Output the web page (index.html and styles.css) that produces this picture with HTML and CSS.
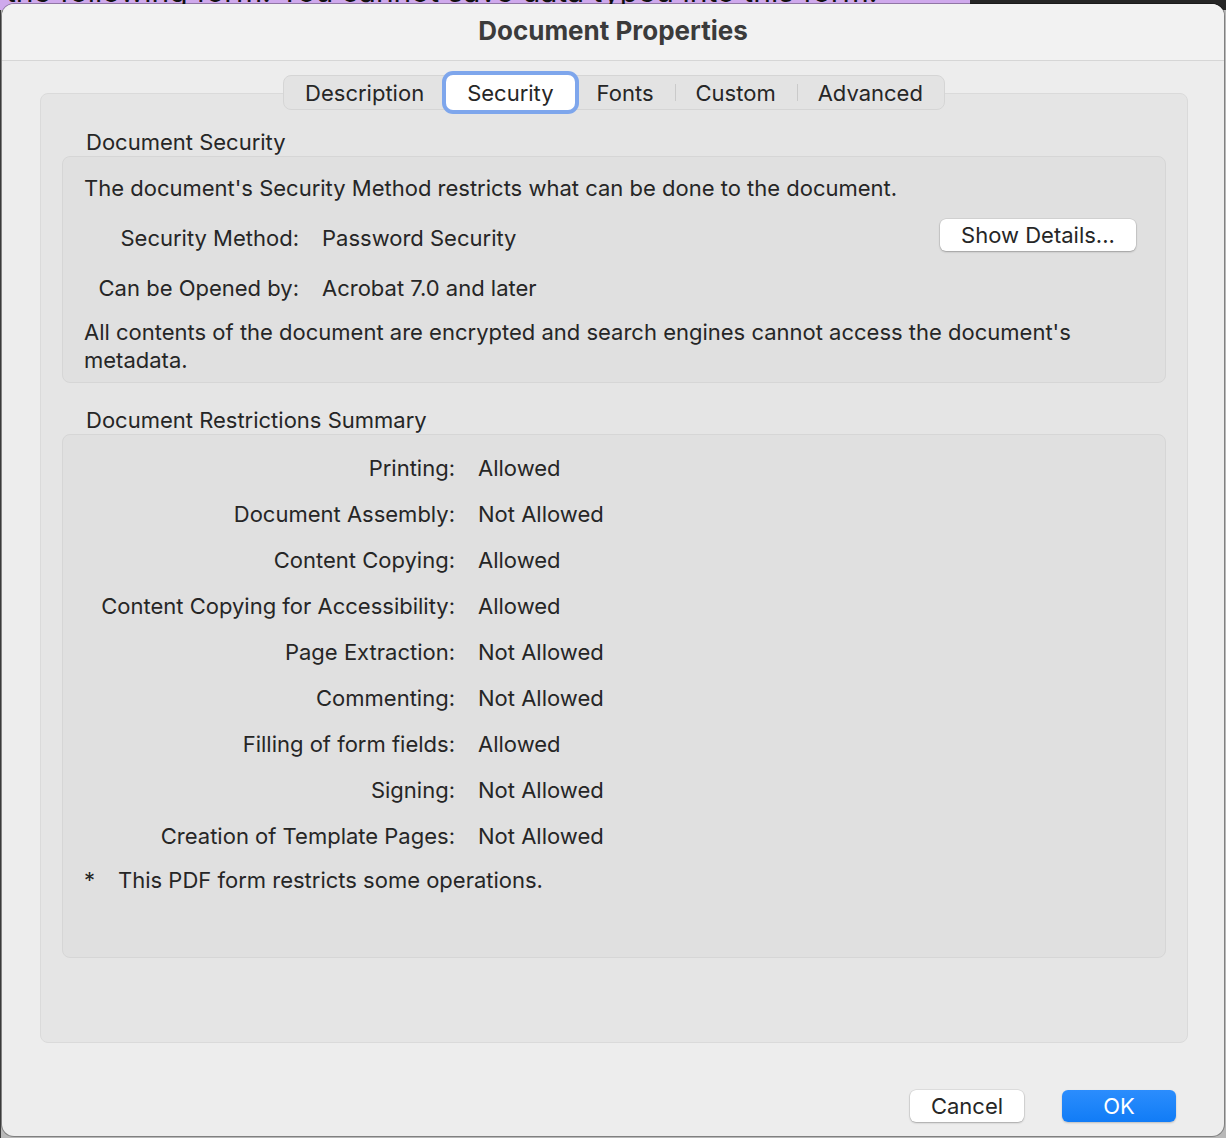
FILE: index.html
```html
<!DOCTYPE html>
<html lang="en">
<head>
    <meta charset="UTF-8">
    <meta name="viewport" content="width=device-width, initial-scale=1.0">
    <title>Document Properties</title>
    <link rel="stylesheet" href="styles.css">
</head>
<body>
    <!-- page behind the sheet, only its last pixels show -->
    <div class="backdrop">
        <p class="backdrop-text">the following form. You cannot save data typed into this form.</p>
    </div>

    <div class="dialog">
        <header class="titlebar">
            <h1>Document Properties</h1>
        </header>

        <main class="content">
            <nav class="tabs">
                <span class="tab">Description</span>
                <span class="tab active">Security</span>
                <span class="tab">Fonts</span>
                <span class="tab sep">Custom</span>
                <span class="tab sep">Advanced</span>
            </nav>

            <div class="tab-box">
                <h2 class="group-title">Document Security</h2>
                <section class="group security">
                    <p class="intro">The document's Security Method restricts what can be done to the document.</p>
                    <div class="info-row method">
                        <span class="info-label">Security Method:</span>
                        <span class="info-value">Password Security</span>
                        <button class="btn details">Show Details...</button>
                    </div>
                    <div class="info-row opened">
                        <span class="info-label">Can be Opened by:</span>
                        <span class="info-value">Acrobat 7.0 and later</span>
                    </div>
                    <p class="note">All contents of the document are encrypted and search engines cannot access the document's metadata.</p>
                </section>

                <h2 class="group-title">Document Restrictions Summary</h2>
                <section class="group restrictions">
                    <dl class="summary">
                        <dt>Printing:</dt><dd>Allowed</dd>
                        <dt>Document Assembly:</dt><dd>Not Allowed</dd>
                        <dt>Content Copying:</dt><dd>Allowed</dd>
                        <dt>Content Copying for Accessibility:</dt><dd>Allowed</dd>
                        <dt>Page Extraction:</dt><dd>Not Allowed</dd>
                        <dt>Commenting:</dt><dd>Not Allowed</dd>
                        <dt>Filling of form fields:</dt><dd>Allowed</dd>
                        <dt>Signing:</dt><dd>Not Allowed</dd>
                        <dt>Creation of Template Pages:</dt><dd>Not Allowed</dd>
                    </dl>
                    <p class="footnote"><span class="star">*</span>This PDF form restricts some operations.</p>
                </section>
            </div>
        </main>

        <footer class="actions">
            <button class="btn cancel">Cancel</button>
            <button class="btn primary">OK</button>
        </footer>
    </div>
</body>
</html>
```

FILE: styles.css
```css
* {
    margin: 0;
    padding: 0;
    box-sizing: border-box;
}
body {
    font-family: Inter, 'Noto Sans', sans-serif;
    font-size: 22px;
    color: #262626;
    background:
        linear-gradient(90deg, #cfa9ec 0, #cfa9ec 970px, #262626 970px) top / 100% 10px no-repeat,
        linear-gradient(90deg, #3a3a3a 0, #3a3a3a 1px, #b8b8b8 1px) #b8b8b8;
    width: 1226px;
    height: 1138px;
    overflow: hidden;
    position: relative;
}
.backdrop {
    position: absolute;
    top: 0;
    left: 6px;
    height: 5px;
    overflow: hidden;
}
.backdrop-text {
    font-size: 30px;
    line-height: 30px;
    margin-top: -24px;
    color: #111;
    white-space: nowrap;
}
.dialog {
    position: relative;
    margin: 4px 0 0 2px;
    width: 1222px;
    height: 1132px;
    background: #ededed;
    border-radius: 12px;
    box-shadow: 0 0 0 1px rgba(0, 0, 0, 0.3);
    display: flex;
    flex-direction: column;
    overflow: hidden;
}
.titlebar {
    height: 57px;
    background: #f2f2f2;
    border-bottom: 1px solid #d6d6d6;
    display: flex;
    align-items: center;
    justify-content: center;
    padding-bottom: 3px;
}
.titlebar h1 {
    font-size: 26px;
    font-weight: 700;
    color: #3b3b3b;
}
.content {
    padding: 14px 36px 0 38px;
    display: flex;
    flex-direction: column;
}

/* segmented tabs */
.tabs {
    align-self: center;
    position: relative;
    z-index: 1;
    margin-bottom: -17px;
    margin-left: 0;
    height: 35px;
    display: flex;
    align-items: stretch;
    background: #e3e3e3;
    border: 1px solid #d5d5d5;
    border-radius: 8px;
}
.tab {
    display: flex;
    align-items: center;
    padding: 0 21px;
    position: relative;
    line-height: 1;
}
.tab.sep::before {
    content: '';
    position: absolute;
    left: 0;
    top: 8px;
    bottom: 8px;
    width: 1px;
    background: #cacaca;
}
.tab.active {
    background: #fff;
    border-radius: 7px;
    margin: -1px 1px;
    padding: 0 21px;
    box-shadow: 0 0 0 4px #7ea6ec;
}

.tab-box {
    height: 950px;
    background: #e5e5e5;
    border: 1px solid #dadada;
    border-radius: 8px;
    padding: 34px 21px 0;
}
.group-title {
    font-size: 22px;
    font-weight: 400;
    line-height: 28px;
    padding-left: 24px;
    margin-top: 0;
    margin-bottom: 0;
}
.group {
    background: #e0e0e0;
    border: 1px solid #d6d6d6;
    border-radius: 8px;
    padding: 0 21px;
    line-height: 28px;
}
.security {
    height: 227px;
    padding-top: 17px;
    margin-bottom: 23px;
}
.info-row {
    display: flex;
    align-items: center;
}
.info-label {
    width: 215px;
    text-align: right;
}
.info-value {
    margin-left: 23px;
}
.method {
    margin-top: 20px;
}
.opened {
    margin-top: 20px;
}
.note {
    margin-top: 16px;
}
.restrictions {
    height: 524px;
    padding-top: 19px;
}
.summary {
    display: grid;
    grid-template-columns: 371px auto;
    column-gap: 23px;
    row-gap: 18px;
}
.summary dt {
    text-align: right;
}
.footnote {
    margin-top: 16px;
    display: flex;
}
.star {
    width: 34px;
    padding-left: 0;
}

/* buttons */
.btn {
    font-family: inherit;
    font-size: 22px;
    color: #262626;
    height: 32px;
    border: none;
    border-radius: 6px;
    background: #fff;
    box-shadow: 0 0 0 0.5px rgba(0, 0, 0, 0.12), 0 1px 2px rgba(0, 0, 0, 0.25);
}
.details {
    width: 196px;
    margin-left: auto;
    margin-right: 8px;
    position: relative;
    top: -3px;
}
.actions {
    display: flex;
    justify-content: flex-end;
    gap: 38px;
    padding: 47px 48px 0 0;
}
.cancel,
.primary {
    width: 114px;
}
.primary {
    background: linear-gradient(#2b8dfd, #117cf6);
    color: #fff;
    box-shadow: 0 1px 2px rgba(0, 0, 0, 0.2);
}
```
